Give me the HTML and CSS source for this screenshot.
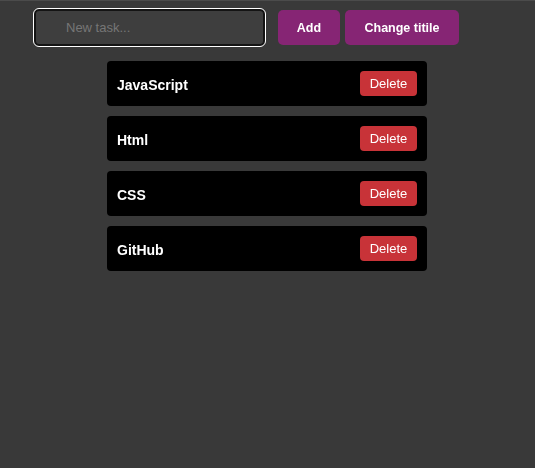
FILE: index.html
```html
<!DOCTYPE html>
<html lang="en">
<head>
<meta charset="utf-8">
<title>Todo</title>
<link rel="stylesheet" href="styles.css">
</head>
<body>
<div class="page">
  <form class="toolbar">
    <input class="task-input" type="text" placeholder="New task..." autofocus>
    <button type="button" class="btn btn-add">Add</button>
    <button type="button" class="btn btn-title">Change titile</button>
  </form>
  <ul class="tasks">
    <li class="task"><span class="task-name">JavaScript</span><button type="button" class="btn-delete">Delete</button></li>
    <li class="task"><span class="task-name">Html</span><button type="button" class="btn-delete">Delete</button></li>
    <li class="task"><span class="task-name">CSS</span><button type="button" class="btn-delete">Delete</button></li>
    <li class="task"><span class="task-name">GitHub</span><button type="button" class="btn-delete">Delete</button></li>
  </ul>
</div>
</body>
</html>
```
FILE: styles.css
```css
html, body {
  margin: 0;
  padding: 0;
  background: #393939;
  height: 100%;
}
body {
  border-top: 1px solid #4b4b4b;
  box-sizing: border-box;
  font-family: "Liberation Sans", Arial, sans-serif;
}
.page {
  display: flex;
  flex-direction: column;
}
.toolbar {
  display: flex;
  align-items: center;
  margin: 8px 0 0 34px;
  height: 37px;
}
.task-input {
  box-sizing: border-box;
  width: 231px;
  height: 37px;
  padding: 0 0 0 30px;
  border: 2px solid #141414;
  border-radius: 5px;
  outline: 1px solid #ffffff;
  outline-offset: 0;
  background: #3e3e3e;
  color: #dddddd;
  font-family: "Liberation Sans", Arial, sans-serif;
  font-size: 13px;
  margin-right: 13px;
}
.task-input::placeholder {
  color: #767676;
}
.btn {
  height: 35px;
  border: none;
  border-radius: 5px;
  background: #862574;
  color: #ffffff;
  font-family: "Liberation Sans", Arial, sans-serif;
  font-weight: bold;
  font-size: 12.5px;
  padding: 0;
}
.btn-add {
  width: 62px;
  margin-right: 5px;
}
.btn-title {
  width: 114px;
}
.tasks {
  list-style: none;
  margin: 15px 0 0 0;
  padding: 0 1px 0 0;
  display: flex;
  flex-direction: column;
  align-items: center;
  gap: 10px;
}
.task {
  box-sizing: border-box;
  width: 320px;
  height: 45px;
  background: #000000;
  border-radius: 4px;
  display: flex;
  align-items: center;
  justify-content: space-between;
  padding: 0 10px;
}
.task-name {
  color: #ffffff;
  font-weight: bold;
  font-size: 14px;
  margin-top: 2px;
}
.btn-delete {
  width: 57px;
  height: 25px;
  border: none;
  border-radius: 4px;
  background: #c83338;
  color: #ffffff;
  font-family: "Liberation Sans", Arial, sans-serif;
  font-size: 13px;
  padding: 0;
  margin-top: -1px;
}
```
